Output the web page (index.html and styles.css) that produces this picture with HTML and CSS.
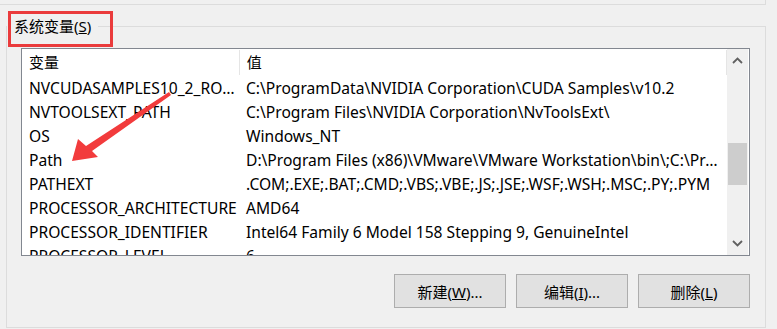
FILE: index.html
```html
<!DOCTYPE html>
<html lang="zh-CN">
<head>
    <meta charset="UTF-8">
    <meta name="viewport" content="width=device-width, initial-scale=1.0">
    <title>系统变量</title>
    <link rel="stylesheet" href="styles.css">
</head>
<body>

    <div class="upper-group"></div>

    <fieldset class="group">
        <legend class="legend">系统变量(<u>S</u>)<span class="mark-box"></span></legend>

        <div class="listbox">
            <div class="table">
                <div class="row head">
                    <div class="cell name">变量</div>
                    <div class="cell value">值</div>
                </div>
                <div class="row"><div class="cell name">NVCUDASAMPLES10_2_ROOT</div><div class="cell value">C:\ProgramData\NVIDIA Corporation\CUDA Samples\v10.2</div></div>
                <div class="row"><div class="cell name">NVTOOLSEXT_PATH</div><div class="cell value">C:\Program Files\NVIDIA Corporation\NvToolsExt\</div></div>
                <div class="row"><div class="cell name">OS</div><div class="cell value">Windows_NT</div></div>
                <div class="row"><div class="cell name">Path</div><div class="cell value">D:\Program Files (x86)\VMware\VMware Workstation\bin\;C:\Program Files\NVIDIA GPU Computing Toolkit\CUDA\v10.2\bin</div></div>
                <div class="row"><div class="cell name">PATHEXT</div><div class="cell value clip">.COM;.EXE;.BAT;.CMD;.VBS;.VBE;.JS;.JSE;.WSF;.WSH;.MSC;.PY;.PYM</div></div>
                <div class="row"><div class="cell name">PROCESSOR_ARCHITECTURE</div><div class="cell value">AMD64</div></div>
                <div class="row"><div class="cell name">PROCESSOR_IDENTIFIER</div><div class="cell value">Intel64 Family 6 Model 158 Stepping 9, GenuineIntel</div></div>
                <div class="row"><div class="cell name">PROCESSOR_LEVEL</div><div class="cell value">6</div></div>
            </div>
            <div class="scrollbar">
                <div class="arrow">
                    <svg width="11" height="7" viewBox="0 0 11 7"><path d="M1 6 L5.5 1.5 L10 6" fill="none" stroke="#606060" stroke-width="1.8"/></svg>
                </div>
                <div class="track"><div class="thumb"></div></div>
                <div class="arrow">
                    <svg width="11" height="7" viewBox="0 0 11 7"><path d="M1 1 L5.5 5.5 L10 1" fill="none" stroke="#606060" stroke-width="1.8"/></svg>
                </div>
            </div>
        </div>

        <div class="buttons">
            <button type="button">新建(<u>W</u>)...</button>
            <button type="button">编辑(<u>I</u>)...</button>
            <button type="button">删除(<u>L</u>)</button>
        </div>
    </fieldset>

    <svg class="pointer" width="777" height="329" viewBox="0 0 777 329">
        <polygon points="72,161 78,139 86,146 169,92 171,95 92,151 98,157" fill="#f23b3c"/>
    </svg>

</body>
</html>
```

FILE: styles.css
```css
body {
    font-family: "Noto Sans", "Noto Sans CJK SC", sans-serif;
    font-size: 15.6px;
    color: #000;
    background: #f0f0f0;
    margin: 0;
    width: 777px;
    height: 329px;
    overflow: hidden;
    position: relative;
}

.upper-group {
    width: 765px;
    height: 4px;
    border-right: 1px solid #dcdcdc;
    border-bottom: 1px solid #dcdcdc;
}

.group {
    margin: 11px 0 0 6px;
    padding: 0 15px 19px 0;
    width: 743px;
    border: 1px solid #dcdcdc;
    min-width: 0;
}

.legend {
    padding: 0 7px;
    line-height: 20px;
    font-size: 15px;
    position: relative;
}

.mark-box {
    position: absolute;
    left: 1px;
    top: -5px;
    width: 99px;
    height: 30px;
    border: 3px solid #ea3b3c;
}

.listbox {
    margin: 12px 0 0 14px;
    height: 206px;
    border: 1px solid #828790;
    background: #fff;
    display: flex;
    overflow: hidden;
}

.table {
    width: 705px;
    overflow: hidden;
}

.row {
    display: flex;
    height: 24px;
    align-items: center;
    white-space: nowrap;
}

.row.head {
    height: 27px;
}

.cell {
    overflow: hidden;
    text-overflow: ellipsis;
}

.name {
    width: 209px;
    padding: 0 1px 0 7px;
}

.value {
    width: 472px;
    padding: 0 8px 0 7px;
}

.value.clip {
    text-overflow: clip;
}

.head .cell {
    height: 25px;
    line-height: 25px;
    border-right: 1px solid #e5e5e5;
    font-size: 15px;
}

.scrollbar {
    width: 21px;
    background: #f0f0f0;
    display: flex;
    flex-direction: column;
}

.arrow {
    height: 17px;
    display: flex;
    align-items: center;
    justify-content: center;
    padding: 3px 0;
}

.track {
    flex: 1;
}

.thumb {
    margin: 71px 1px 0 1px;
    height: 42px;
    background: #cdcdcd;
}

.buttons {
    display: flex;
    justify-content: flex-end;
    gap: 10px;
    margin-top: 18px;
}

.buttons button {
    width: 112px;
    height: 34px;
    background: #e1e1e1;
    border: 1px solid #adadad;
    font-family: "Noto Sans", "Noto Sans CJK SC", sans-serif;
    font-size: 15px;
    color: #000;
    padding: 0;
}

.pointer {
    position: absolute;
    left: 0;
    top: 0;
    pointer-events: none;
}
```
